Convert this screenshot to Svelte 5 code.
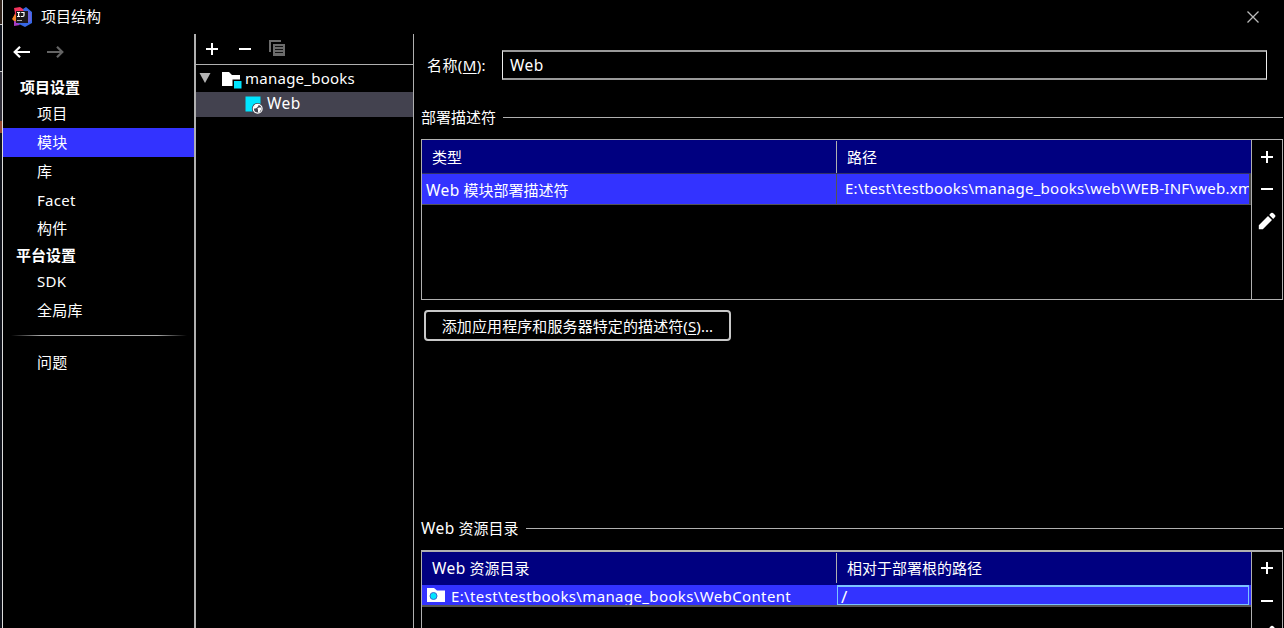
<script>
  const projectItems = ['项目', '模块', '库', 'Facet', '构件'];
  const platformItems = ['SDK', '全局库'];
  const selected = '模块';
</script>

{#snippet plus()}
  <svg class="ico" width="16" height="16" viewBox="0 0 16 16"><path d="M7 2h2v5h5v2H9v5H7V9H2V7h5z" fill="#fff" /></svg>
{/snippet}
{#snippet minus()}
  <svg class="ico" width="16" height="16" viewBox="0 0 16 16"><path d="M2 7h12v2H2z" fill="#fff" /></svg>
{/snippet}
{#snippet pencil()}
  <svg class="ico pen" width="18" height="18" viewBox="0 0 18 18"><path d="M0.8 17.2v-4L10 4l4 4-9.200 9.200zM11.200 2.900l1.800-1.800q1-.9 2 0l2 2q.9 1 0 2l-1.800 1.800z" fill="#fff" /></svg>
{/snippet}

<div class="window">
  <div class="edge"><i class="a"></i><i class="b"></i><i class="c"></i></div>
  <header class="title">
    <svg class="logo" width="20" height="20" viewBox="0 0 20 20">
      <path d="M2 1l6-1 6 4-8 9-4-2 1-5z" fill="#f2335d" />
      <path d="M0 12l3-5 3 6-3 2z" fill="#f58529" />
      <path d="M2 14l4 1 2 3-6 1z" fill="#a83bc4" />
      <path d="M11 2l3-2 6 5v11l-7 4-8-4 8-4z" fill="#3768e5" />
      <path d="M15 3l4 3v8l-4 2z" fill="#6a62dc" />
      <path d="M4 4h12v12H4z" fill="#1c171b" />
      <path d="M5 5.500h3.200M6.600 5.500v4M5 9.500h3.200M9.200 5.500h2.800v2.800q0 1.200-1.200 1.200H9" fill="none" stroke="#fff" stroke-width="1.200" />
      <path d="M5 13h5v1H5z" fill="#aaa" />
    </svg>
    <span class="caption">项目结构</span>
    <svg class="close" width="12" height="12" viewBox="0 0 12 12"><path d="M.5.5l11 11M11.500.5l-11 11" stroke="#bbb" stroke-width="1.300" /></svg>
  </header>

  <nav class="side">
    <div class="arrows">
      <svg width="17" height="12" viewBox="0 0 17 12"><path d="M7 .8L1.700 6 7 11.200M2 6h15" fill="none" stroke="#fff" stroke-width="2.200" /></svg>
      <svg width="17" height="12" viewBox="0 0 17 12"><path d="M10 .8L15.300 6 10 11.200M15 6H0" fill="none" stroke="#646464" stroke-width="2.200" /></svg>
    </div>
    <div class="head first">项目设置</div>
    {#each projectItems as item}
      <div class="item" class:on={item === selected} class:short={item === '构件'}>{item}</div>
    {/each}
    <div class="head">平台设置</div>
    {#each platformItems as item}
      <div class="item">{item}</div>
    {/each}
    <div class="sep"></div>
    <div class="item">问题</div>
  </nav>

  <section class="tree">
    <div class="tools">
      {@render plus()}
      {@render minus()}
      <svg class="copy" width="16" height="16" viewBox="0 0 16 16"><path d="M1 12V1h11" fill="none" stroke="#6c6c6c" stroke-width="2" /><path d="M4 4h12v12H4z" fill="#6c6c6c" /><path d="M6 6.500h8M6 9.500h8M6 12.500h8" stroke="#111" stroke-width="1" /></svg>
    </div>
    <div class="node root">
      <svg class="tri" width="12" height="10" viewBox="0 0 12 10"><path d="M.5 0h11L6 10z" fill="#b4b4b4" /></svg>
      <svg class="folder" width="20" height="18" viewBox="0 0 20 18"><path d="M0 1h7l3 3h8v11H0z" fill="#fff" /><path d="M10.500 8.500H20V18h-9.500z" fill="#000" /><path d="M12 10h7.500v7.500H12z" fill="#00e5ff" /></svg>
      <span class="mb">manage_books</span>
    </div>
    <div class="node leaf">
      <svg class="webico" width="18" height="18" viewBox="0 0 18 18"><path d="M.5.5h15v15H.5z" fill="#00e5ff" /><circle cx="12.700" cy="12.700" r="5.800" fill="#43424f" /><circle cx="12.700" cy="12.700" r="4.400" fill="#43424f" stroke="#fff" stroke-width="1.200" /><path d="M8.500 11.500l2-3 2.500-.5.500 2-2 2-2 .8zM12.500 12l3-.8 1 1.800-2 3-1.500.5v-2.500z" fill="#fff" /></svg>
      <span class="web">Web</span>
    </div>
  </section>

  <main>
    <div class="form">
      <label for="name">名称(<u>M</u>):</label>
      <div class="field" id="name">Web</div>
    </div>

    <div class="legend l1"><span>部署描述符</span><i></i></div>
    <div class="panel p1">
      <div class="table">
        <div class="th"><div class="first">类型</div><div class="split">路径</div></div>
        <div class="tr r1"><div class="desc"><b>Web</b> 模块部署描述符</div><div class="path">E:\test\testbooks\manage_books\web\WEB-INF\web.xml</div></div>
      </div>
      <div class="bar">{@render plus()}{@render minus()}{@render pencil()}</div>
    </div>

    <button>添加应用程序和服务器特定的描述符(<u>S</u>)...</button>

    <div class="legend l2"><span><b>Web</b> 资源目录</span><i></i></div>
    <div class="panel p2">
      <div class="table">
        <div class="th"><div><b>Web</b> 资源目录</div><div class="split">相对于部署根的路径</div></div>
        <div class="tr r2">
          <div class="dir">
            <svg width="18" height="15" viewBox="0 0 18 15"><path d="M0 0h7l3 2.500h8V14H0z" fill="#fff" /><circle cx="6.500" cy="8" r="3.500" fill="#00e5ff" stroke="#3a66d0" stroke-width="1" /></svg>
            <span class="latin">E:\test\testbooks\manage_books\WebContent</span>
          </div>
          <div class="edit">/</div>
        </div>
      </div>
      <div class="bar">{@render plus()}{@render minus()}{@render pencil()}</div>
    </div>
  </main>
</div>

<style>
  :global(body) { background: #000; overflow: hidden; }
  .window {
    display: grid;
    grid-template: 34px 594px / 3px 193px 218px 870px;
    width: 1284px; height: 628px; overflow: hidden;
    background: #000; color: #fff;
    font: 15px/20px "Noto Sans", "Noto Sans CJK SC", sans-serif;
    white-space: nowrap;
  }
  .window * { box-sizing: border-box; }
  svg { display: block; flex: none; }
  u { text-underline-offset: 2px; text-decoration-thickness: 1px; }
  b { font-weight: 400; font-size: 15.5px; line-height: 1; letter-spacing: .4px; }
  .latin { letter-spacing: .37px; }
  .edge { grid-row: 1 / 3; border-right: 1px solid #ddd; background: #10131b; display: flex; flex-direction: column; }
  .edge .a { height: 24px; background: #30221a; }
  .edge .b { height: 47px; background: #11151f; border-top: 1px solid #ccc; }
  .edge .c { height: 62px; background: #302f3a; border-top: 1px solid #ccc; border-bottom: 12px solid #9b4b31; }
  .title { grid-column: 2 / 5; display: flex; align-items: center; padding: 0 25px 0 9px; }
  .caption { margin: -2px 0 0 9px; }
  .close { margin-left: auto; }
  .side { border-right: 2px solid #b0b0b0; }
  .arrows { height: 42px; display: flex; gap: 17px; padding: 12px 0 0 10px; }
  .head { height: 24px; line-height: 24px; padding-left: 13px; font-weight: 700; }
  .head.first { padding-left: 17px; height: 23px; line-height: 22px; }
  .item { height: 29px; line-height: 28px; padding-left: 34px; letter-spacing: .3px; }
  .item.short { height: 28px; line-height: 27px; }
  .item.on { background: #3333ff; line-height: 29px; }
  .sep { height: 1px; margin: 10px 7px 12px 8px; background: linear-gradient(90deg, transparent, #aaa 17%, #aaa 83%, transparent); }
  .tree { border-right: 1px solid #b0b0b0; }
  .tools { height: 31px; display: flex; gap: 17px; padding: 7px 0 0 8px; border-bottom: 1px solid #b0b0b0; }
  .copy { margin: -1px 0 0 -1px; }
  .node { display: flex; align-items: center; }
  .root { height: 27px; padding-left: 3px; }
  .tri { margin-top: -1px; }
  .mb { letter-spacing: .25px; margin-top: -2px; }
  .folder { margin: 3px 3px 0 11px; }
  .leaf { height: 25px; padding-left: 49px; background: #43424f; }
  .web { font-size: 15.5px; letter-spacing: .4px; margin-top: -3px; }
  .webico { margin: 1px 4px 0 0; }
  main { display: flex; flex-direction: column; min-width: 0; }
  .form { display: flex; align-items: center; height: 30px; margin: 16px 17px 0 13px; flex: none; }
  label { width: 75px; letter-spacing: .4px; }
  .field { flex: 1; height: 30px; line-height: 27px; padding-left: 7px; font-size: 15.5px; letter-spacing: .4px; border: 1px solid #e8e8e8; border-width: 2px 1px; border-color: #999 #eee; }
  .legend { display: flex; align-items: center; height: 20px; padding-left: 7px; margin-right: 1px; flex: none; }
  .legend i { flex: 1; height: 1px; background: #b0b0b0; margin-left: 7px; }
  .l1 { margin-top: 27px; margin-bottom: 12px; }
  .l2 { margin-top: 177px; margin-bottom: 12px; }
  .l2 span { width: 98px; }
  .panel { display: flex; margin: 0 1px 0 7px; border: 1px solid #b0b0b0; flex: none; }
  .p1 { height: 161px; }
  .p2 { height: 100px; border-top-width: 2px; }
  .table { flex: 1; min-width: 0; }
  .th, .tr { display: grid; grid-template-columns: 414px 415px; }
  .th { height: 33px; background: #000080; line-height: 34px; }
  .p2 .th { line-height: 32px; }
  .th div { padding-left: 10px; }
  .th .split { border-left: 1px solid #b0b0b0; height: 32px; margin-top: 1px; line-height: 32px; }
  .p2 .split { height: 30px; line-height: 30px; }
  .r1 { height: 32px; background: #3333ff; border-top: 1px solid #333366; border-bottom: 1px solid #555; line-height: 29px; }
  .desc { padding-left: 4px; line-height: 32px; }
  .path { height: 30px; letter-spacing: .26px; border-left: 1px solid #555; border-right: 2px solid #444; padding-left: 8px; overflow: hidden; }
  .r2 { height: 22px; background: #3333ff; border-bottom: 2px solid #555; }
  .dir { display: flex; align-items: center; padding-left: 5px; height: 20px; overflow: hidden; line-height: 22px; }
  .dir span { margin-left: 6px; height: 19px; overflow: hidden; line-height: 21px; }
  .edit { height: 20px; border: 1px solid #7cc4ff; border-top-width: 2px; margin: 0 2px 0 1px; padding-left: 3px; line-height: 19px; font-size: 17px; }
  .bar { width: 31px; border-left: 1px solid #b0b0b0; padding: 9px 0 0 7px; display: flex; flex-direction: column; gap: 16px; flex: none; }
  .p2 .bar { padding-top: 8px; gap: 17px; }
  .pen { margin: -1px 0 0 -1px; }
  button {
    align-self: flex-start; flex: none; width: 307px; height: 31px; margin: 10px 0 0 10px; padding: 0;
    background: #000; color: #fff; font: inherit; letter-spacing: .1px; border: 2px solid #c8c8c8; border-radius: 4px;
  }
</style>
